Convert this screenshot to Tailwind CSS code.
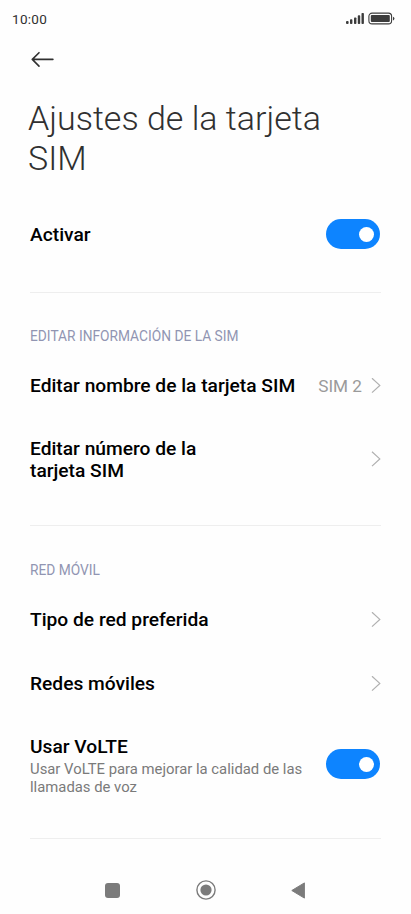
<!DOCTYPE html>
<html lang="es">
<head>
<meta charset="utf-8">
<meta name="viewport" content="width=device-width, initial-scale=1">
<title>Ajustes de la tarjeta SIM</title>
<script src="https://cdn.jsdelivr.net/npm/@tailwindcss/browser@4"></script>
</head>
<body class="bg-[#fefefe] font-[Roboto,sans-serif] text-black">
<div class="flex h-[914px] w-[411px] flex-col overflow-hidden">
  <div class="flex h-[38px] shrink-0 items-center justify-between pl-3 pr-4">
    <span class="text-[13.5px] leading-4 tracking-[0.3px] text-[#303030]">10:00</span>
    <svg class="h-[14px] w-[50px]" viewBox="0 0 50 14" fill="none">
      <g fill="#3c3c3c">
        <rect x="1" y="9" width="2.6" height="3" rx="1"/>
        <rect x="5" y="7.3" width="2.4" height="4.7" rx=".8"/>
        <rect x="9" y="5.4" width="2.4" height="6.6" rx=".8"/>
        <rect x="12.8" y="3.2" width="2.4" height="8.8" rx=".8"/>
        <rect x="16.5" y="1" width="2.4" height="11" rx=".8"/>
        <rect x="25.8" y="3" width="19" height="7" rx="1"/>
        <path d="M48 4.7q1.4.5 1.4 1.9t-1.4 1.9z"/>
      </g>
      <rect x="23.9" y="1.1" width="22.7" height="10.8" rx="3.2" stroke="#3c3c3c" stroke-width="1.1"/>
    </svg>
  </div>
  <div class="h-[60px] shrink-0 pl-[30px] pt-[13px]">
    <svg class="h-4 w-6" viewBox="0 0 24 16" fill="none" stroke="#303030" stroke-width="1.6" stroke-linecap="round" stroke-linejoin="round"><path d="M9 1.7 2.3 8.4 9 15.1M2.5 8.4H22.9"/></svg>
  </div>
  <h1 class="h-[104px] shrink-0 pl-7 text-[34px] font-light leading-10 text-[#303030]">Ajustes de la tarjeta<br>SIM</h1>
  <main class="flex flex-col pl-[30px] pr-[30px]">
    <div class="flex h-[91px] items-start justify-between border-b border-[#eeeeee] pt-[17px]">
      <span class="mt-[5px] text-[19.2px] font-medium leading-[22px]">Activar</span>
      <span class="mr-[1px] flex h-[30px] w-[54px] items-center justify-end rounded-full bg-[#0d84ff] pr-[6px]"><i class="size-[15px] rounded-full bg-white"></i></span>
    </div>
    <section class="flex h-[233px] flex-col border-b border-[#eeeeee] pt-[35px]">
      <h2 class="h-[26px] text-[13.75px] leading-4 text-[#9195b2]">EDITAR INFORMACIÓN DE LA SIM</h2>
      <div class="flex h-16 items-center">
        <span class="text-[19.2px] font-medium leading-[22px]">Editar nombre de la tarjeta SIM</span>
        <span class="ml-auto text-[17.2px] leading-5 text-[#9a9a9a]">SIM 2</span>
        <svg class="ml-[9px] h-4 w-[10px]" viewBox="0 0 10 16" fill="none" stroke="#b0b0b0" stroke-width="1.2"><path d="M1 .2 8.8 7.4 1 14.6"/></svg>
      </div>
      <div class="flex h-[83px] items-center justify-between">
        <span class="pt-px text-[19.2px] font-medium leading-[22.5px]">Editar número de la<br>tarjeta SIM</span>
        <svg class="mb-px h-4 w-[10px]" viewBox="0 0 10 16" fill="none" stroke="#b0b0b0" stroke-width="1.2"><path d="M1 .7 8.8 7.9 1 15.1"/></svg>
      </div>
    </section>
    <section class="flex h-[313px] flex-col border-b border-[#eeeeee] pt-[36px]">
      <h2 class="h-[26px] text-[13.75px] leading-4 text-[#9195b2]">RED MÓVIL</h2>
      <div class="flex h-16 items-center justify-between">
        <span class="text-[19.2px] font-medium leading-[22px]">Tipo de red preferida</span>
        <svg class="h-4 w-[10px]" viewBox="0 0 10 16" fill="none" stroke="#b0b0b0" stroke-width="1.2"><path d="M1 .2 8.8 7.4 1 14.6"/></svg>
      </div>
      <div class="flex h-16 items-center justify-between">
        <span class="text-[19.2px] font-medium leading-[22px]">Redes móviles</span>
        <svg class="h-4 w-[10px]" viewBox="0 0 10 16" fill="none" stroke="#b0b0b0" stroke-width="1.2"><path d="M1 .2 8.8 7.4 1 14.6"/></svg>
      </div>
      <div class="flex items-start justify-between pt-[20px]">
        <div>
          <div class="text-[19.2px] font-medium leading-[22px]">Usar VoLTE</div>
          <div class="mt-[3px] text-[14.85px] leading-[17.5px] text-[#7a7a7a]">Usar VoLTE para mejorar la calidad de las<br>llamadas de voz</div>
        </div>
        <span class="mr-[1px] mt-[13px] flex h-[30px] w-[54px] shrink-0 items-center justify-end rounded-full bg-[#0d84ff] pr-[6px]"><i class="size-[15px] rounded-full bg-white"></i></span>
      </div>
    </section>
  </main>
  <nav class="mt-auto flex h-12 items-center justify-between pl-[105px] pr-[106px]">
    <i class="size-[15px] rounded-[3px] bg-[#7b7b7b]"></i>
    <svg class="size-5" viewBox="0 0 20 20"><circle cx="10" cy="10" r="9.1" fill="none" stroke="#7b7b7b" stroke-width="1.4"/><circle cx="10" cy="10" r="5.6" fill="#7b7b7b"/></svg>
    <svg class="h-[17px] w-[14px]" viewBox="0 0 14 17"><path d="M.8 8.5 13.4.9V16.1z" fill="#7b7b7b" stroke="#7b7b7b" stroke-width="1" stroke-linejoin="round"/></svg>
  </nav>
</div>
</body>
</html>
